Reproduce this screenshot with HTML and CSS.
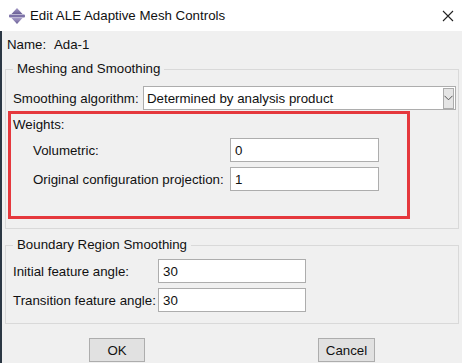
FILE: index.html
```html
<!DOCTYPE html>
<html lang="en">
<head>
    <meta charset="UTF-8">
    <title>Edit ALE Adaptive Mesh Controls</title>
    <link rel="stylesheet" href="styles.css">
</head>
<body>
    <div class="window">
        <div class="titlebar">
            <svg class="app-icon" width="16" height="16" viewBox="0 0 16 16">
                <defs>
                    <linearGradient id="ic" x1="0" y1="0" x2="0" y2="1">
                        <stop offset="0" stop-color="#a79cc8"/>
                        <stop offset="1" stop-color="#6a5f96"/>
                    </linearGradient>
                </defs>
                <polygon points="8,0 13.5,6 2.5,6" fill="url(#ic)"/>
                <rect x="0" y="6.5" width="16" height="3" rx="1" fill="#7d72a8"/>
                <polygon points="2.5,10 13.5,10 8,16" fill="url(#ic)"/>
            </svg>
            <span class="title">Edit ALE Adaptive Mesh Controls</span>
            <svg class="close" width="12" height="12" viewBox="0 0 12 12">
                <path d="M1 1 L11 11 M11 1 L1 11" stroke="#222" stroke-width="1.1" fill="none"/>
            </svg>
        </div>

        <div class="dialog">
            <div class="name-row">
                <span>Name:</span>
                <span class="name-value">Ada-1</span>
            </div>

            <fieldset class="group meshing">
                <legend>Meshing and Smoothing</legend>
                <div class="algo-row">
                    <label class="algo-label">Smoothing algorithm:</label>
                    <div class="combo">
                        <span class="combo-text">Determined by analysis product</span>
                        <span class="combo-btn">
                            <svg width="9" height="6" viewBox="0 0 9 6">
                                <path d="M0.5 0.8 L4.5 4.8 L8.5 0.8" stroke="#555" stroke-width="1" fill="none"/>
                            </svg>
                        </span>
                    </div>
                </div>

                <div class="weights">
                    <div class="weights-title">Weights:</div>
                    <div class="field">
                        <label class="weight-label">Volumetric:</label>
                        <input class="box weight-input" type="text" value="0">
                    </div>
                    <div class="field second">
                        <label class="weight-label">Original configuration projection:</label>
                        <input class="box weight-input" type="text" value="1">
                    </div>
                </div>
            </fieldset>

            <fieldset class="group boundary">
                <legend>Boundary Region Smoothing</legend>
                <div class="field first">
                    <label class="angle-label">Initial feature angle:</label>
                    <input class="box angle-input" type="text" value="30">
                </div>
                <div class="field second">
                    <label class="angle-label">Transition feature angle:</label>
                    <input class="box angle-input" type="text" value="30">
                </div>
            </fieldset>

            <div class="buttons">
                <button class="btn ok">OK</button>
                <button class="btn cancel">Cancel</button>
            </div>
        </div>
    </div>
</body>
</html>
```

FILE: styles.css
```css
body {
    margin: 0;
    padding: 0;
    font-family: "Liberation Sans", Arial, sans-serif;
    font-size: 13.3px;
    color: #111;
    background: #f0f0f0;
    overflow: hidden;
}

.window {
    width: 462px;
    height: 363px;
    overflow: hidden;
}

.titlebar {
    height: 31px;
    background: #fff;
    display: flex;
    align-items: center;
}

.app-icon {
    margin-left: 9px;
    flex-shrink: 0;
}

.title {
    margin-left: 5px;
    font-size: 13.3px;
    color: #111;
    white-space: nowrap;
}

.close {
    margin-left: auto;
    margin-right: 8px;
}

.dialog {
    height: 332px;
    border-left: 2px solid #2b3744;
    background: #f0f0f0;
}

.name-row {
    padding: 4px 0 0 5px;
    height: 20px;
    line-height: 20px;
}

.name-value {
    margin-left: 4px;
}

.group {
    margin: 5px 3px 0 3px;
    padding: 0 2px;
    border: 1px solid #d9d9d9;
    min-width: 0;
}

.group legend {
    margin-left: 5px;
    padding: 0 4px;
    line-height: 18px;
}

label {
    white-space: nowrap;
    flex-shrink: 0;
}

.algo-row {
    display: flex;
    align-items: center;
    margin-top: 8px;
    padding-left: 5px;
}

.algo-label {
    width: 130px;
}

.combo {
    flex: 1;
    height: 22px;
    border: 1px solid #adadad;
    background: #fff;
    display: flex;
    align-items: center;
}

.combo-text {
    padding-left: 3px;
    white-space: nowrap;
}

.combo-btn {
    margin-left: auto;
    margin-right: 1px;
    width: 9px;
    height: 19px;
    border: 1px solid #acacac;
    background: #e5e5e5;
    display: flex;
    align-items: center;
    justify-content: center;
}

.weights {
    margin: 1px 0 9px 0;
    width: 394px;
    border: 3px solid #e5383d;
    padding: 1px 0 25px 2px;
}

.weights-title {
    line-height: 20px;
}

.field {
    display: flex;
    align-items: center;
}

.weights .field {
    padding-left: 20px;
    margin-top: 3px;
}

.field.second {
    margin-top: 5px;
}

.weight-label {
    width: 197px;
}

.box {
    height: 24px;
    box-sizing: border-box;
    border: 1px solid #adadad;
    background: #fff;
    font-family: inherit;
    font-size: 13.3px;
    color: #111;
    padding: 0 4px;
    margin: 0;
    outline: none;
}

.weight-input {
    width: 149px;
}

.boundary {
    margin-top: 7px;
    padding-bottom: 11px;
}

.boundary .field {
    padding-left: 5px;
}

.boundary .field.first {
    margin-top: 5px;
}

.angle-label {
    width: 145px;
}

.angle-input {
    width: 148px;
}

.buttons {
    display: flex;
    margin-top: 14px;
}

.btn {
    height: 24px;
    border: 1px solid #adadad;
    background: #e1e1e1;
    font-family: inherit;
    font-size: 13.3px;
    color: #111;
    padding: 0;
}

.ok {
    width: 56px;
    margin-left: 87px;
}

.cancel {
    width: 57px;
    margin-left: 173px;
}
```
